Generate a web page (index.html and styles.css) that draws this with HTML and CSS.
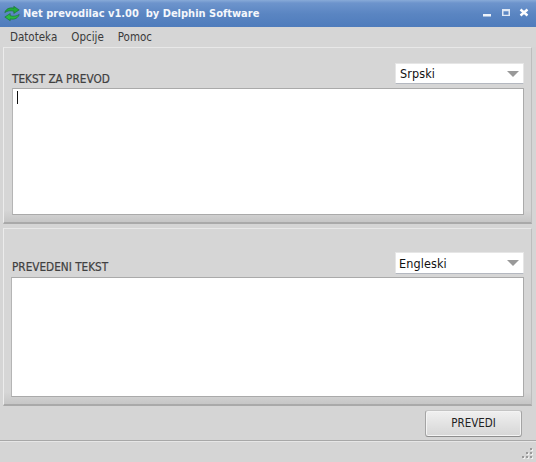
FILE: index.html
```html
<!DOCTYPE html>
<html lang="en">
<head>
    <meta charset="UTF-8">
    <title>Net prevodilac v1.00 by Delphin Software</title>
    <link rel="stylesheet" href="styles.css">
</head>
<body>
    <div class="window">
        <div class="titlebar">
            <svg class="app-icon" width="18" height="17" viewBox="0 0 20 18">
                <path d="M2 8 C3 4 7 2 12 3 L12 1 L18 5 L12 9 L12 6.5 C8 5.5 5 6 2 8Z" fill="#22a83a" stroke="#0f6a22" stroke-width="0.6"/>
                <path d="M18 10 C17 14 13 16 8 15 L8 17 L2 13 L8 9 L8 11.5 C12 12.5 15 12 18 10Z" fill="#2cb845" stroke="#0f6a22" stroke-width="0.6"/>
            </svg>
            <span class="title">Net prevodilac v1.00&nbsp; by Delphin Software</span>
            <div class="controls">
                <svg width="12" height="12" viewBox="0 0 12 12"><rect x="3" y="6" width="8" height="2.5" fill="#eef3fa"/></svg>
                <svg width="12" height="12" viewBox="0 0 12 12"><path d="M3 1H11V8H3Z M4.5 3.2V6.8H9.5V3.2Z" fill="#dfe8f5" fill-rule="evenodd"/></svg>
                <svg width="12" height="12" viewBox="0 0 12 12"><path d="M2.5 1.5L9.5 7.5M9.5 1.5L2.5 7.5" stroke="#fff" stroke-width="2.4"/></svg>
            </div>
        </div>

        <div class="menubar">
            <span>Datoteka</span>
            <span>Opcije</span>
            <span>Pomoc</span>
        </div>

        <div class="panel panel-top">
            <div class="panel-head">
                <label>TEKST ZA PREVOD</label>
                <div class="combo"><span>Srpski</span><i class="arrow"></i></div>
            </div>
            <div class="textbox"><i class="caret"></i></div>
        </div>

        <div class="panel panel-bottom">
            <div class="panel-head">
                <label>PREVEDENI TEKST</label>
                <div class="combo"><span>Engleski</span><i class="arrow"></i></div>
            </div>
            <div class="textbox"></div>
        </div>

        <div class="actions">
            <button type="button">PREVEDI</button>
        </div>

        <div class="statusbar">
            <svg width="12" height="12" viewBox="0 0 12 12">
                <g fill="#f0f0f0">
                    <rect x="10" y="2" width="2" height="2"/>
                    <rect x="6" y="6" width="2" height="2"/><rect x="10" y="6" width="2" height="2"/>
                    <rect x="2" y="10" width="2" height="2"/><rect x="6" y="10" width="2" height="2"/><rect x="10" y="10" width="2" height="2"/>
                </g>
                <g fill="#9a9a9a">
                    <rect x="9" y="1" width="2" height="2"/>
                    <rect x="5" y="5" width="2" height="2"/><rect x="9" y="5" width="2" height="2"/>
                    <rect x="1" y="9" width="2" height="2"/><rect x="5" y="9" width="2" height="2"/><rect x="9" y="9" width="2" height="2"/>
                </g>
            </svg>
        </div>
    </div>
</body>
</html>
```

FILE: styles.css
```css
html, body {
    margin: 0;
    padding: 0;
}
body {
    font-family: "DejaVu Sans", sans-serif;
    font-stretch: condensed;
    background: #d4d4d4;
}
.window {
    width: 536px;
    height: 462px;
    box-sizing: border-box;
    display: flex;
    flex-direction: column;
    background: #d5d5d5;
    overflow: hidden;
}
.titlebar {
    height: 27px;
    flex: none;
    display: flex;
    align-items: center;
    padding: 0 6px 0 3px;
    box-sizing: border-box;
    background: linear-gradient(#88aad8 0, #6d94cc 3px, #5a85c2 14px, #4f7cbc 100%);
}
.app-icon {
    margin-right: 2px;
}
.title {
    color: #f4f7fc;
    font-size: 11px;
    font-weight: bold;
}
.controls {
    margin-left: auto;
    display: flex;
    gap: 7px;
}
.menubar {
    height: 20px;
    flex: none;
    display: flex;
    align-items: center;
    gap: 14px;
    padding-left: 10px;
    font-size: 11.5px;
    color: #3a3a3a;
    background: #d6d6d6;
}
.panel {
    flex: none;
    margin: 0 4px 0 3px;
    padding: 0 7px 7px 8px;
    box-sizing: border-box;
    display: flex;
    flex-direction: column;
    border: 1px solid #bdbdbd;
    border-top-color: #e8e8e8;
    border-left-color: #ececec;
    border-bottom: 2px solid #a9a9a9;
    background: linear-gradient(#d6d6d6 calc(100% - 12px), #c6c6c6);
}
.panel-top {
    height: 177px;
}
.panel-bottom {
    height: 178px;
    margin-top: 4px;
    padding-left: 7px;
}
.panel-head {
    height: 40px;
    flex: none;
    display: flex;
    align-items: flex-end;
    justify-content: space-between;
    padding-bottom: 3px;
    box-sizing: border-box;
}
.panel-bottom .panel-head {
    height: 48px;
}
.panel-head label {
    font-size: 11.7px;
    color: #404040;
    line-height: 12px;
    -webkit-text-stroke: 0.2px #404040;
}
.panel-bottom .panel-head label {
    margin: 0 0 1px 1px;
}
.combo {
    width: 129px;
    height: 21px;
    box-sizing: border-box;
    display: flex;
    align-items: center;
    justify-content: space-between;
    padding: 0 4px;
    background: #fff;
    border: 1px solid #e6e6e6;
    border-bottom-color: #b4b8c0;
    font-size: 12.5px;
    color: #111;
    letter-spacing: 0.1px;
}
.panel-top .combo {
    margin-bottom: 1px;
}
.panel-bottom .combo {
    height: 22px;
    padding-left: 3px;
}
.arrow {
    width: 0;
    height: 0;
    border-left: 6px solid transparent;
    border-right: 6px solid transparent;
    border-top: 6px solid #999;
}
.textbox {
    flex: 1;
    background: #fff;
    border: 1px solid #aaa;
    border-left-color: #b5b5b5;
    padding: 2px 4px;
}
.caret {
    display: block;
    width: 1px;
    height: 13px;
    background: #111;
}
.actions {
    height: 35px;
    flex: none;
    display: flex;
    align-items: center;
    justify-content: flex-end;
    padding-right: 14px;
    border-bottom: 1px solid #a8a8a8;
    box-sizing: border-box;
}
button {
    width: 97px;
    height: 27px;
    font-family: inherit;
    font-stretch: condensed;
    font-size: 11.5px;
    color: #222;
    background: linear-gradient(#f0f0f0, #d6d6d6);
    border: 1px solid #a4a4a4;
    border-top-color: #c4c4c4;
    border-bottom-color: #8e8e8e;
    border-radius: 3px;
    box-shadow: inset 0 0 0 1px #f4f4f4;
}
.statusbar {
    flex: 1;
    display: flex;
    justify-content: flex-end;
    align-items: flex-end;
    padding: 0 3px 3px 0;
    border-top: 1px solid #e6e6e6;
}
```
